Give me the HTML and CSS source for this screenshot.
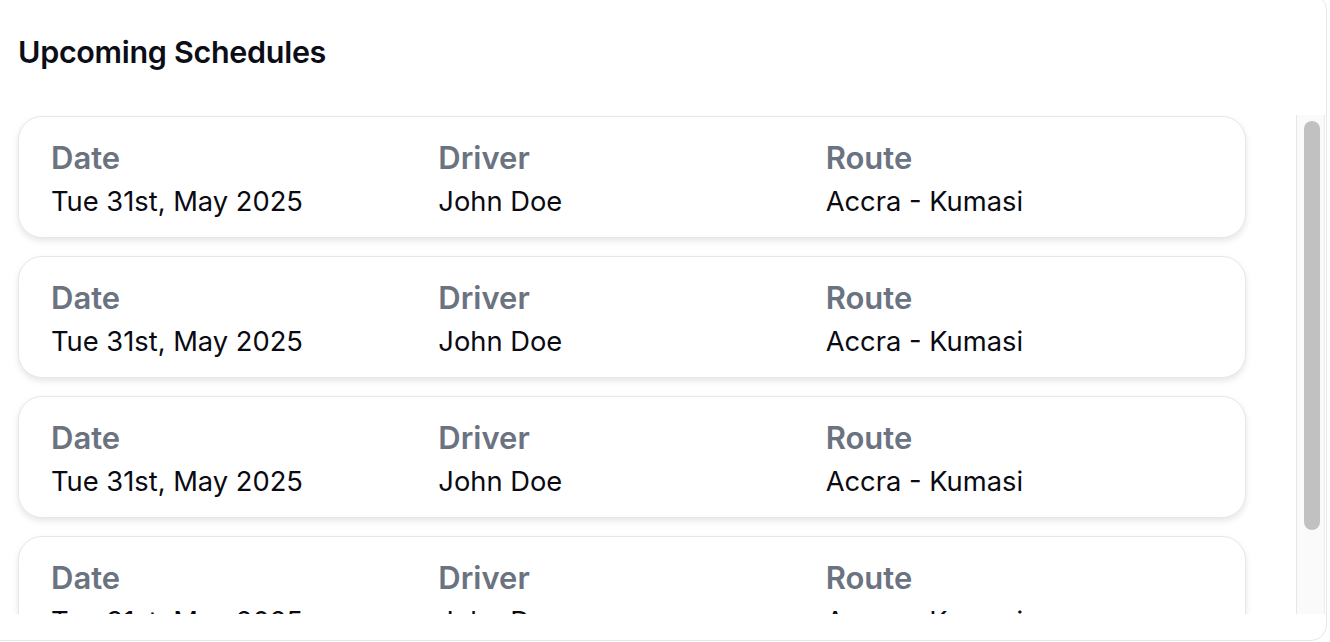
FILE: index.html
```html
<!DOCTYPE html>
<html lang="en">
<head>
    <meta charset="UTF-8">
    <meta name="viewport" content="width=device-width, initial-scale=1.0">
    <title>Upcoming Schedules</title>
    <link rel="stylesheet" href="styles.css">
</head>
<body>
    <div class="panel">
        <h2>Upcoming Schedules</h2>
        <div class="schedule-wrap">
            <div class="schedule-list">
                <div class="schedule">
                    <div class="field">
                        <div class="label">Date</div>
                        <div class="value">Tue 31st, May 2025</div>
                    </div>
                    <div class="field">
                        <div class="label">Driver</div>
                        <div class="value">John Doe</div>
                    </div>
                    <div class="field">
                        <div class="label">Route</div>
                        <div class="value">Accra - Kumasi</div>
                    </div>
                </div>
                <div class="schedule">
                    <div class="field">
                        <div class="label">Date</div>
                        <div class="value">Tue 31st, May 2025</div>
                    </div>
                    <div class="field">
                        <div class="label">Driver</div>
                        <div class="value">John Doe</div>
                    </div>
                    <div class="field">
                        <div class="label">Route</div>
                        <div class="value">Accra - Kumasi</div>
                    </div>
                </div>
                <div class="schedule">
                    <div class="field">
                        <div class="label">Date</div>
                        <div class="value">Tue 31st, May 2025</div>
                    </div>
                    <div class="field">
                        <div class="label">Driver</div>
                        <div class="value">John Doe</div>
                    </div>
                    <div class="field">
                        <div class="label">Route</div>
                        <div class="value">Accra - Kumasi</div>
                    </div>
                </div>
                <div class="schedule">
                    <div class="field">
                        <div class="label">Date</div>
                        <div class="value">Tue 31st, May 2025</div>
                    </div>
                    <div class="field">
                        <div class="label">Driver</div>
                        <div class="value">John Doe</div>
                    </div>
                    <div class="field">
                        <div class="label">Route</div>
                        <div class="value">Accra - Kumasi</div>
                    </div>
                </div>
            </div>
            <div class="scrollbar">
                <div class="thumb"></div>
            </div>
        </div>
    </div>
</body>
</html>
```

FILE: styles.css
```css
body {
    font-family: Inter, "Noto Sans", sans-serif;
    background-color: #fff;
    margin: 0;
    overflow: hidden;
}

.panel {
    width: 1347px;
    margin: -6px 0 0 -20px;
    padding: 39px 1px 26px 19px;
    box-sizing: border-box;
    border: 1px solid #e5e7eb;
    border-radius: 16px;
    background-color: #fff;
}

h2 {
    margin: 0 0 45px 18px;
    font-size: 30.5px;
    line-height: 36px;
    font-weight: 600;
    color: #0b0d17;
    letter-spacing: -0.3px;
}

.schedule-wrap {
    display: flex;
    height: 499px;
}

.schedule-list {
    flex: 1;
    overflow: hidden;
    padding: 1px 50px 0 18px;
    display: flex;
    flex-direction: column;
    gap: 18px;
}

.scrollbar {
    width: 29px;
    box-sizing: border-box;
    padding: 6px 4px 0 7px;
    background-color: #fafafa;
    border-left: 1px solid #e6e6e6;
    border-right: 1px solid #ececec;
}

.thumb {
    height: 409px;
    background-color: #c1c1c1;
    border-radius: 8px;
}

.schedule {
    flex: 0 0 auto;
    display: grid;
    grid-template-columns: 1fr 1fr 1fr;
    padding: 21px 32px 15px;
    border: 1px solid #e5e7eb;
    border-radius: 24px;
    box-shadow: 0 3px 6px rgba(0, 0, 0, 0.1);
    background-color: #fff;
}

.label {
    font-size: 31px;
    line-height: 40px;
    font-weight: 600;
    color: #6b7280;
    margin-bottom: 4px;
}

.value {
    font-size: 27.3px;
    line-height: 40px;
    color: #0a0a12;
}
```
